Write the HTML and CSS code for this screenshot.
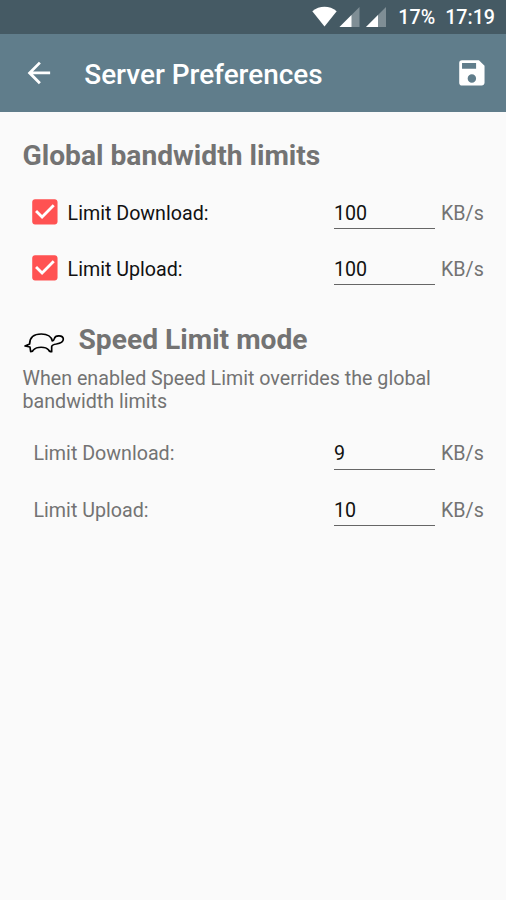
FILE: index.html
```
<!DOCTYPE html>
<html lang="en">
<head>
<meta charset="utf-8">
<title>Server Preferences</title>
<link rel="stylesheet" href="styles.css">
</head>
<body>
<div class="status">
  <svg class="signals" width="76" height="22" viewBox="0 0 76 22">
    <path fill="#fff" d="M0.3 5.2C7.5-.6 17.5-.6 24.7 5.2L12.5 20.5Z"/>
    <path fill="#7f8e95" d="M47.5 1V21H27.5Z"/>
    <path fill="#fff" d="M39.5 9V21H27.5Z"/>
    <path fill="#7f8e95" d="M74 1V21H54Z"/>
    <path fill="#fff" d="M66 9V21H54Z"/>
  </svg>
  <span class="battery">17%</span>
  <span class="clock">17:19</span>
</div>
<header class="toolbar">
  <svg class="back" width="33.75" height="33.75" viewBox="0 0 24 24"><path fill="#fff" d="M20 11H7.83l5.59-5.59L12 4l-8 8 8 8 1.41-1.41L7.83 13H20v-2z"/></svg>
  <h1 class="title">Server Preferences</h1>
  <svg class="save" width="33.75" height="33.75" viewBox="0 0 24 24"><path fill="#fff" d="M17 3H5a2 2 0 0 0-2 2v14a2 2 0 0 0 2 2h14c1.1 0 2-.9 2-2V7l-4-4zm-5 16c-1.66 0-3-1.34-3-3s1.34-3 3-3 3 1.34 3 3-1.34 3-3 3zm3-10H5V5h10v4z"/></svg>
</header>
<main class="content">
  <h2 class="heading">Global bandwidth limits</h2>
  <div class="rows limits">
    <div class="row">
      <svg class="check" width="33.75" height="33.75" viewBox="0 0 24 24"><rect x="4" y="4" width="16" height="16" fill="#fff"/><path fill="#ff5252" d="M19 3H5c-1.11 0-2 .9-2 2v14c0 1.1.89 2 2 2h14c1.11 0 2-.9 2-2V5c0-1.1-.89-2-2-2zm-9 14l-5-5 1.41-1.41L10 14.17l7.59-7.59L19 8l-9 9z"/></svg>
      <span class="label active">Limit Download:</span>
      <span class="field">100</span>
      <span class="unit">KB/s</span>
    </div>
    <div class="row">
      <svg class="check" width="33.75" height="33.75" viewBox="0 0 24 24"><rect x="4" y="4" width="16" height="16" fill="#fff"/><path fill="#ff5252" d="M19 3H5c-1.11 0-2 .9-2 2v14c0 1.1.89 2 2 2h14c1.11 0 2-.9 2-2V5c0-1.1-.89-2-2-2zm-9 14l-5-5 1.41-1.41L10 14.17l7.59-7.59L19 8l-9 9z"/></svg>
      <span class="label active">Limit Upload:</span>
      <span class="field">100</span>
      <span class="unit">KB/s</span>
    </div>
  </div>
  <div class="mode">
    <svg class="turtle" width="44" height="22" viewBox="20 50 132 66"><path fill="none" stroke="#000" stroke-width="5" stroke-linejoin="round" d="M43 86C43 67 55 56 78 56C99 56 108 64 111 77C115 77 116 74 117 70C120 58 143 59 144 71C144 81 136 84 123 86C115 87 110 89 109 94V109C105 109 101 108 100 104C91 93 64 93 54 104C53 108 50 109 46 109L44 95L29 92Z"/></svg>
    <h2 class="heading">Speed Limit mode</h2>
  </div>
  <p class="desc">When enabled Speed Limit overrides the global bandwidth limits</p>
  <div class="rows plain">
    <div class="row">
      <span class="label">Limit Download:</span>
      <span class="field">9</span>
      <span class="unit">KB/s</span>
    </div>
    <div class="row">
      <span class="label">Limit Upload:</span>
      <span class="field">10</span>
      <span class="unit">KB/s</span>
    </div>
  </div>
</main>
</body>
</html>
```
FILE: styles.css
```
* { box-sizing: border-box; }
body {
  margin: 0;
  min-height: 900px;
  background: #fafafa;
  color: #737373;
  font: 19.67px/23px Roboto, sans-serif;
}
svg { display: block; flex: none; }
.status {
  display: flex;
  align-items: center;
  justify-content: flex-end;
  height: 34px;
  padding: 1px 11px 0 0;
  background: #455a64;
  color: #fff;
  font-weight: 500;
}
.signals { margin: 0 10px 2px 0; }
.battery { margin-right: 10px; }
.toolbar {
  display: flex;
  align-items: center;
  height: 78px;
  padding: 0 17px 0 22.2px;
  background: #607d8b;
  color: #fff;
}
.title {
  flex: 1;
  margin: 0 0 0 28.3px;
  padding-top: 2px;
  font-size: 27.95px;
  line-height: 33px;
  font-weight: 500;
}
.content { padding: 26.6px 22.5px 0; }
.heading {
  margin: 0;
  font-size: 28.2px;
  line-height: 33px;
  font-weight: 700;
}
.rows { margin-top: 12.6px; }
.row {
  display: flex;
  align-items: center;
  height: 56.25px;
  padding-left: 5.3px;
}
.check { margin: 0 6px 1px 0; }
.label { flex: 1; }
.active { color: #111; }
.limits .label,
.limits .unit { padding-top: 1.6px; }
.plain .label,
.plain .unit { padding-top: 1px; }
.field {
  width: 101px;
  height: 33px;
  padding-top: 5.4px;
  border-bottom: 1px solid #666;
  color: #111;
}
.limits .field { padding-top: 6px; }
.unit {
  width: 42.5px;
  margin-left: 6px;
  white-space: nowrap;
}
.mode {
  display: flex;
  align-items: center;
  margin-top: 26px;
}
.turtle { margin: 7px 13px 0 -1px; }
.desc { margin: 11px 0 0; }
.plain .row { padding-left: 11px; }
```
